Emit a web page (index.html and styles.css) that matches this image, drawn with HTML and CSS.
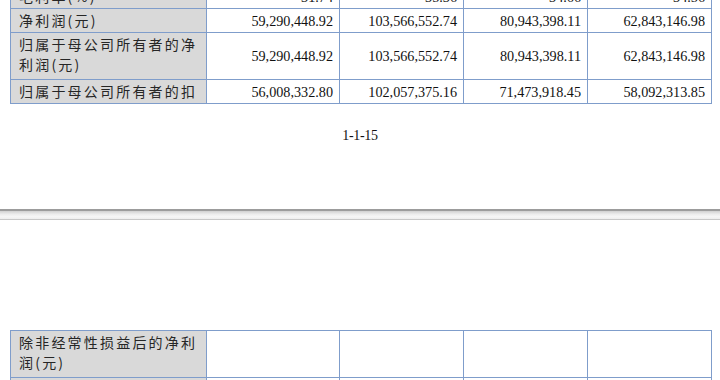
FILE: index.html
```html
<!DOCTYPE html>
<html lang="zh-CN">
<head>
<meta charset="utf-8">
<title>财务数据</title>
<link rel="stylesheet" href="styles.css">
</head>
<body>
<div class="page page-top">
  <table class="fin fin-top">
    <colgroup>
      <col class="c-label"><col class="c-n1"><col class="c-n"><col class="c-n"><col class="c-n">
    </colgroup>
    <tr class="r1">
      <td class="label">毛利率(%)</td>
      <td class="num">31.74</td>
      <td class="num">35.36</td>
      <td class="num">34.66</td>
      <td class="num">34.56</td>
    </tr>
    <tr class="r1">
      <td class="label">净利润(元)</td>
      <td class="num">59,290,448.92</td>
      <td class="num">103,566,552.74</td>
      <td class="num">80,943,398.11</td>
      <td class="num">62,843,146.98</td>
    </tr>
    <tr class="r2">
      <td class="label">归属于母公司所有者的净利润(元)</td>
      <td class="num">59,290,448.92</td>
      <td class="num">103,566,552.74</td>
      <td class="num">80,943,398.11</td>
      <td class="num">62,843,146.98</td>
    </tr>
    <tr class="r1">
      <td class="label">归属于母公司所有者的扣</td>
      <td class="num">56,008,332.80</td>
      <td class="num">102,057,375.16</td>
      <td class="num">71,473,918.45</td>
      <td class="num">58,092,313.85</td>
    </tr>
  </table>
  <div class="pageno">1-1-15</div>
</div>
<div class="sep"></div>
<div class="page page-bottom">
  <table class="fin fin-bottom">
    <colgroup>
      <col class="c-label"><col class="c-n1"><col class="c-n"><col class="c-n"><col class="c-n">
    </colgroup>
    <tr class="r2b">
      <td class="label">除非经常性损益后的净利润(元)</td>
      <td class="num"></td>
      <td class="num"></td>
      <td class="num"></td>
      <td class="num"></td>
    </tr>
    <tr class="r1">
      <td class="label">&nbsp;</td>
      <td class="num"></td>
      <td class="num"></td>
      <td class="num"></td>
      <td class="num"></td>
    </tr>
  </table>
</div>
</body>
</html>
```

FILE: styles.css
```css
html, body {
  margin: 0;
  padding: 0;
  background: #ffffff;
  overflow: hidden;
}
body {
  width: 720px;
  height: 380px;
  color: #161616;
}
.page {
  background: #ffffff;
}
.page-top {
  height: 209px;
  overflow: hidden;
}
.page-bottom {
  height: 171px;
  overflow: hidden;
}
.fin {
  border-collapse: collapse;
  table-layout: fixed;
  width: 701px;
  margin-left: 10px;
}
.fin-top {
  margin-top: -16px;
}
.fin-bottom {
  margin-top: 110px;
}
.c-label { width: 196px; }
.c-n1 { width: 133px; }
.c-n { width: 124px; }
.fin td {
  border: 1px solid #7f9dcb;
  padding: 0;
  line-height: 20px;
}
.fin td.label {
  background: #d9d9d9;
  font-family: "Noto Sans CJK SC", "Noto Sans", sans-serif;
  font-size: 14px;
  letter-spacing: 2.2px;
  color: #262626;
  padding: 1px 6px 1px 8px;
  vertical-align: top;
  word-break: break-all;
}
.fin td.num {
  font-family: "Liberation Serif", "Times New Roman", serif;
  font-size: 14.2px;
  text-align: right;
  padding: 1px 6px 1px 4px;
  vertical-align: middle;
  color: #111111;
}
.r1 td { height: 21px; }
.r2 td { height: 44px; padding-top: 2px; }
.r2b td { height: 44px; padding-top: 3px; }
.pageno {
  margin-top: 24px;
  text-align: center;
  font-family: "Liberation Serif", "Times New Roman", serif;
  font-size: 14px;
  line-height: 16px;
  color: #111111;
  letter-spacing: -0.3px;
}
.sep {
  height: 11px;
  box-sizing: border-box;
  border-top: 2px solid #9c9c9c;
  border-bottom: 1px solid #c8c8c8;
  background: linear-gradient(#d0d0d0, #ececec 40%, #f6f6f6 70%, #eeeeee);
}
```
